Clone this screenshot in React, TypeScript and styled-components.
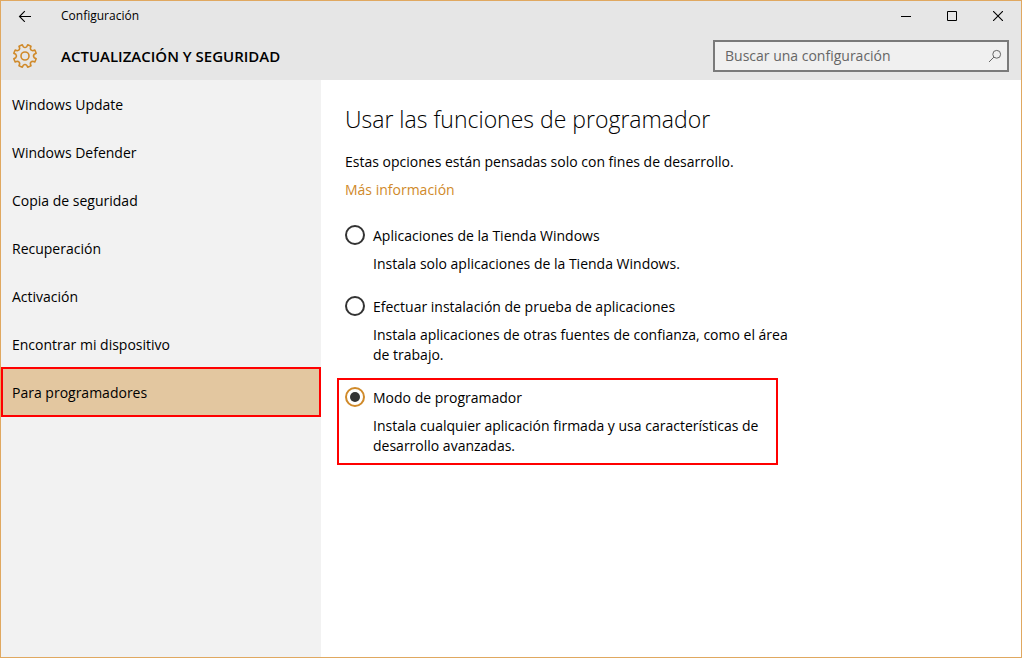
import React, { useState } from "react";
import styled, { createGlobalStyle } from "styled-components";

const ACCENT = "#d08a2a";

const GlobalStyle = createGlobalStyle`
  *, *::before, *::after { box-sizing: border-box; }
  body {
    margin: 0;
    font-family: "Open Sans", "Noto Sans", sans-serif;
    font-size: 14px;
    line-height: 20px;
    color: #000;
    background: #fff;
  }
  button, input { font: inherit; color: inherit; }
`;

const Window = styled.div`
  display: flex;
  flex-direction: column;
  min-height: 100vh;
  border: 1px solid #e0a860;
  background: #fff;
`;

const Header = styled.header`
  background: #e6e6e6;
`;

const TitleBar = styled.div`
  display: flex;
  align-items: center;
  height: 30px;
`;

const BarButton = styled.button<{ $width: number }>`
  display: flex;
  align-items: center;
  justify-content: center;
  width: ${(p) => p.$width}px;
  height: 30px;
  padding: 0;
  border: 0;
  background: transparent;
`;

const AppName = styled.span`
  flex: 1;
  padding-left: 12px;
  font-size: 12px;
`;

const SectionBar = styled.div`
  display: flex;
  align-items: center;
  height: 49px;
  padding: 0 12px 0 11px;
`;

const SectionTitle = styled.h1`
  flex: 1;
  margin: 0 0 0 23px;
  font-size: 15px;
  font-weight: 600;
`;

const SearchBox = styled.label`
  display: flex;
  align-items: center;
  width: 296px;
  height: 32px;
  padding: 0 5px 0 10px;
  border: 2px solid #7a7a7a;
  background: #f0f0f0;
`;

const SearchInput = styled.input`
  flex: 1;
  min-width: 0;
  padding: 0;
  border: 0;
  outline: 0;
  background: transparent;
  &::placeholder { color: #666; opacity: 1; }
`;

const Body = styled.div`
  display: flex;
  flex: 1;
`;

const Sidebar = styled.nav`
  flex: none;
  width: 320px;
  background: #f2f2f2;
`;

const NavItem = styled.a<{ $active: boolean }>`
  display: flex;
  align-items: center;
  height: ${(p) => (p.$active ? 50 : 48)}px;
  margin: ${(p) => (p.$active ? "-1px 0" : "0")};
  padding: 2px 9px 0;
  border: solid ${(p) => (p.$active ? "#f00" : "transparent")};
  border-width: ${(p) => (p.$active ? "2px" : "0 2px")};
  background: ${(p) => (p.$active ? "#e3c7a0" : "transparent")};
  color: #000;
  text-decoration: none;
`;

const Content = styled.main`
  flex: 1;
  min-width: 0;
  padding: 23px 16px;
`;

const Intro = styled.section`
  padding: 0 8px;
`;

const Heading = styled.h2`
  margin: 0 0 17px;
  font-size: 23px;
  font-weight: 300;
  line-height: 32px;
`;

const Paragraph = styled.p`
  margin: 0 0 8px;
`;

const MoreLink = styled.a`
  color: ${ACCENT};
  text-decoration: none;
`;

const Options = styled.fieldset`
  display: flex;
  flex-direction: column;
  gap: 4px;
  min-width: 0;
  margin: 16px 0 0;
  padding: 0;
  border: 0;
`;

const Option = styled.div<{ $marked: boolean }>`
  max-width: ${(p) => (p.$marked ? 441 : 470)}px;
  padding: 7px 6px;
  border: 2px solid ${(p) => (p.$marked ? "#f00" : "transparent")};
`;

const OptionLabel = styled.label`
  display: flex;
  align-items: flex-start;
  gap: 8px;
`;

const OptionName = styled.span`
  padding-top: 1px;
`;

const Radio = styled.input`
  display: grid;
  place-items: center;
  flex: none;
  appearance: none;
  width: 20px;
  height: 20px;
  margin: 0;
  border: 2px solid #333;
  border-radius: 50%;
  background: #fff;
  &:checked { border-color: ${ACCENT}; }
  &:checked::before {
    content: "";
    width: 10px;
    height: 10px;
    border-radius: 50%;
    background: #333;
  }
`;

const Description = styled.p`
  margin: 8px 0 0 28px;
`;

function gearPath(): string {
  const point = (r: number, deg: number) => {
    const a = (deg * Math.PI) / 180;
    return `${(13 + r * Math.sin(a)).toFixed(2)} ${(13 - r * Math.cos(a)).toFixed(2)}`;
  };
  let d = "";
  for (let i = 0; i < 8; i++) {
    const c = 22.5 + i * 45;
    d += `${i ? "L" : "M"}${point(9.4, c - 12)}L${point(11.5, c - 9)}L${point(11.5, c + 9)}L${point(9.4, c + 12)}`;
    d += `Q${point(7.8, c + 22.5)} ${point(9.4, c + 33)}`;
  }
  return d + "Z";
}

const GearIcon = () => (
  <svg width="26" height="26" viewBox="0 0 26 26" fill="none" stroke={ACCENT} strokeWidth="1.6" strokeLinejoin="round" aria-hidden="true">
    <path d={gearPath()} />
    <circle cx="13" cy="13" r="4" />
  </svg>
);

const BackIcon = () => (
  <svg width="14" height="12" viewBox="0 0 14 12" fill="none" stroke="#000" strokeWidth="1.1" aria-hidden="true">
    <path d="M13 6.5H1.5M6.8 1.2L1.5 6.5L6.8 11.8" />
  </svg>
);

const MinimizeIcon = () => (
  <svg width="10" height="10" viewBox="0 0 10 10" stroke="#000" aria-hidden="true">
    <path d="M0 5.5H10" />
  </svg>
);

const MaximizeIcon = () => (
  <svg width="10" height="10" viewBox="0 0 10 10" fill="none" stroke="#000" aria-hidden="true">
    <path d="M.5 .5H9.5V9.5H.5Z" />
  </svg>
);

const CloseIcon = () => (
  <svg width="10" height="10" viewBox="0 0 10 10" stroke="#000" strokeWidth="1.1" aria-hidden="true">
    <path d="M0 0L10 10M10 0L0 10" />
  </svg>
);

const SearchIcon = () => (
  <svg width="14" height="14" viewBox="0 0 14 14" fill="none" stroke="#666" strokeWidth="1" aria-hidden="true">
    <circle cx="8.7" cy="5.3" r="3.9" />
    <path d="M5.9 8.1L1 13" />
  </svg>
);

const NAV = [
  "Windows Update",
  "Windows Defender",
  "Copia de seguridad",
  "Recuperación",
  "Activación",
  "Encontrar mi dispositivo",
  "Para programadores",
];

const MODES = [
  {
    id: "store",
    label: "Aplicaciones de la Tienda Windows",
    text: "Instala solo aplicaciones de la Tienda Windows.",
  },
  {
    id: "sideload",
    label: "Efectuar instalación de prueba de aplicaciones",
    text: "Instala aplicaciones de otras fuentes de confianza, como el área de trabajo.",
  },
  {
    id: "developer",
    label: "Modo de programador",
    text: "Instala cualquier aplicación firmada y usa características de desarrollo avanzadas.",
  },
];

export default function App() {
  const [mode, setMode] = useState("developer");
  return (
    <>
      <GlobalStyle />
      <Window>
        <Header>
          <TitleBar>
            <BarButton $width={48} aria-label="Atrás"><BackIcon /></BarButton>
            <AppName>Configuración</AppName>
            <BarButton $width={46} aria-label="Minimizar"><MinimizeIcon /></BarButton>
            <BarButton $width={46} aria-label="Maximizar"><MaximizeIcon /></BarButton>
            <BarButton $width={46} aria-label="Cerrar"><CloseIcon /></BarButton>
          </TitleBar>
          <SectionBar>
            <GearIcon />
            <SectionTitle>ACTUALIZACIÓN Y SEGURIDAD</SectionTitle>
            <SearchBox>
              <SearchInput type="text" placeholder="Buscar una configuración" aria-label="Buscar una configuración" />
              <SearchIcon />
            </SearchBox>
          </SectionBar>
        </Header>
        <Body>
          <Sidebar>
            {NAV.map((name) => (
              <NavItem key={name} href="#" $active={name === "Para programadores"}>
                {name}
              </NavItem>
            ))}
          </Sidebar>
          <Content>
            <Intro>
              <Heading>Usar las funciones de programador</Heading>
              <Paragraph>Estas opciones están pensadas solo con fines de desarrollo.</Paragraph>
              <MoreLink href="#">Más información</MoreLink>
            </Intro>
            <Options aria-label="Usar las funciones de programador">
              {MODES.map((m) => (
                <Option key={m.id} $marked={m.id === "developer"}>
                  <OptionLabel>
                    <Radio
                      type="radio"
                      name="mode"
                      checked={mode === m.id}
                      onChange={() => setMode(m.id)}
                      aria-describedby={`${m.id}-text`}
                    />
                    <OptionName>{m.label}</OptionName>
                  </OptionLabel>
                  <Description id={`${m.id}-text`}>{m.text}</Description>
                </Option>
              ))}
            </Options>
          </Content>
        </Body>
      </Window>
    </>
  );
}
